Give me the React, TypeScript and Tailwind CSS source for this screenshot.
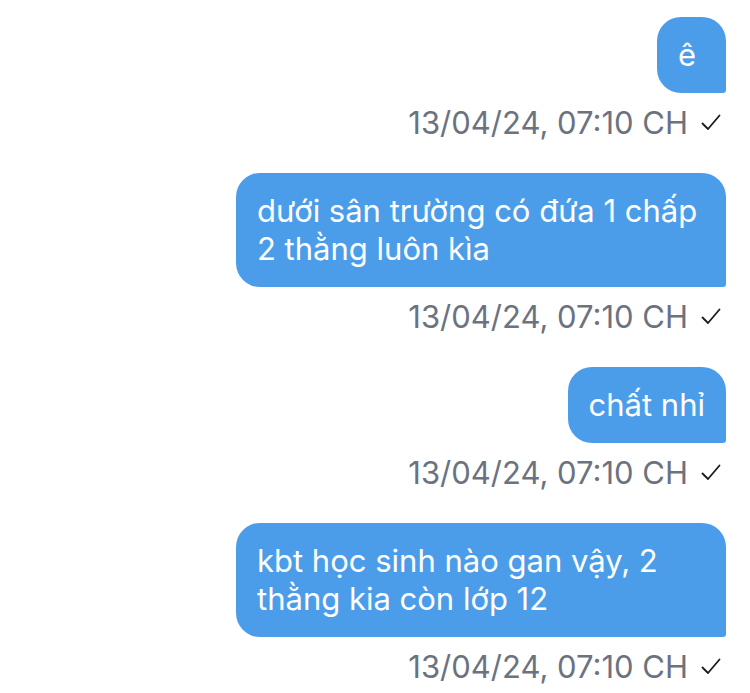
import React from 'react';

type Message = {
  id: number;
  text: string;
  time: string;
};

const messages: Message[] = [
  { id: 1, text: 'ê', time: '13/04/24, 07:10 CH' },
  { id: 2, text: 'dưới sân trường có đứa 1 chấp 2 thằng luôn kìa', time: '13/04/24, 07:10 CH' },
  { id: 3, text: 'chất nhỉ', time: '13/04/24, 07:10 CH' },
  { id: 4, text: 'kbt học sinh nào gan vậy, 2 thằng kia còn lớp 12', time: '13/04/24, 07:10 CH' },
];

const Check = () => (
  <svg width="20" height="17" viewBox="0 0 20 17" fill="none" stroke="#1c1c1e" strokeWidth="1.8" strokeLinecap="round" strokeLinejoin="round">
    <polyline points="1.5,9.5 7,15 18.5,1.5" />
  </svg>
);

const Bubble: React.FC<{ msg: Message }> = ({ msg }) => (
  <div className="flex flex-col items-end">
    {/* outgoing bubble, tail corner bottom-right */}
    <div className="max-w-[490px] min-w-[69px] bg-[#4c9de9] text-white rounded-[24px] rounded-br-[3px] px-[21px] py-[19px] text-[31px] leading-[38px]">
      {msg.text}
    </div>
    <div className="mt-[12px] mr-[5px] flex items-center gap-[13px] text-[31px] leading-[35px]">
      <span className="text-[#6b7280]">{msg.time}</span>
      <Check />
    </div>
  </div>
);

const App: React.FC = () => {
  return (
    <div
      className="min-h-screen bg-white pt-[17px] pr-[24px] flex flex-col gap-[33px]"
      style={{ fontFamily: 'Inter, "Noto Sans", sans-serif' }}
    >
      {messages.map(m => (
        <Bubble key={m.id} msg={m} />
      ))}
    </div>
  );
};

export default App;
